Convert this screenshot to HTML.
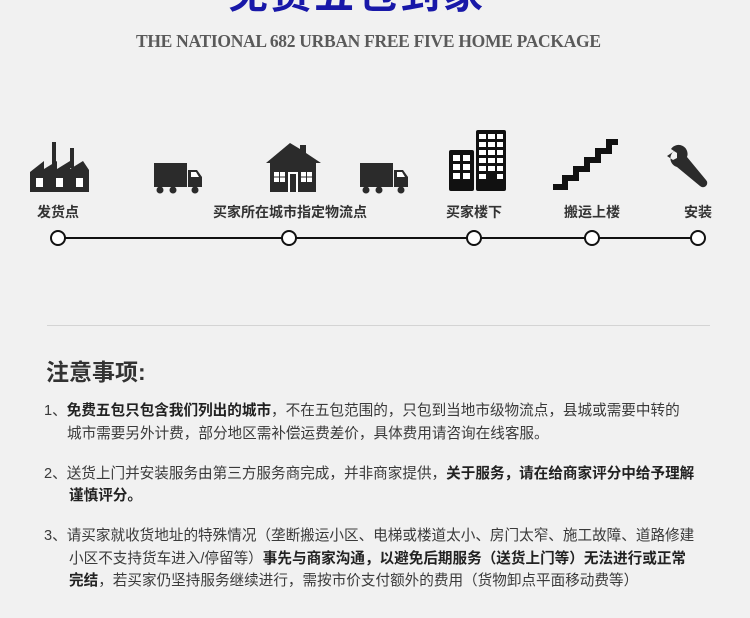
<!DOCTYPE html>
<html><head><meta charset="utf-8"><style>
html,body{margin:0;padding:0}
body{width:750px;height:618px;background:#f1f1f1;position:relative;overflow:hidden;font-family:"Liberation Sans","Noto Sans CJK SC",sans-serif;color:#333}
.a{position:absolute;white-space:nowrap}
.t{font-size:14.6px;line-height:22px;color:#3a3a3a}
.b{font-weight:bold;color:#222}
.lab{font-size:14px;font-weight:bold;color:#333;transform:translateX(-50%)}
</style></head><body>
<div class="a" style="left:228px;top:-38px;font-size:40px;font-weight:bold;color:#1818a8;letter-spacing:3px;font-family:'Noto Sans CJK SC',sans-serif">免费五包到家</div>
<div class="a" style="left:136px;top:31px;font-family:'Liberation Serif',serif;font-size:17.5px;font-weight:bold;color:#5a5a5a;letter-spacing:-0.3px">THE NATIONAL 682 URBAN FREE FIVE HOME PACKAGE</div>

<svg class="a" style="left:0;top:0" width="750" height="260">
<g fill="#2b2b2b">
<rect x="52" y="142" width="4" height="26"/><rect x="70" y="148" width="4" height="20"/>
<polygon points="30,192 30,172 44,161 44,169 57,161 57,169 70,161 70,169 83,161 89,170 89,192"/>
<rect x="154" y="163" width="33" height="24"/>
<path d="M188,170 h9 l5,7 v10 h-14z"/>
<circle cx="160" cy="190" r="3.5"/><circle cx="173" cy="190" r="3.5"/><circle cx="195" cy="190" r="3.5"/>
<polygon points="266,163 290,143 300,149 300,145 306,145 306,153 321,163"/>
<rect x="270" y="163" width="46" height="29"/>
<rect x="360" y="163" width="33" height="24"/>
<path d="M394,170 h9 l5,7 v10 h-14z"/>
<circle cx="366" cy="190" r="3.5"/><circle cx="379" cy="190" r="3.5"/><circle cx="401" cy="190" r="3.5"/>
</g>
<g fill="#fff">
<rect x="36" y="178" width="7" height="9"/><rect x="56" y="178" width="7" height="9"/><rect x="76" y="178" width="7" height="9"/>
<path d="M191,172 h5 l3,5 h-8z"/><path d="M397,172 h5 l3,5 h-8z"/>
<rect x="274" y="172" width="11" height="10"/><rect x="301" y="172" width="11" height="10"/>
<rect x="288" y="172" width="10" height="20"/>
</g>
<g fill="#2b2b2b"><rect x="279" y="172" width="1" height="10"/><rect x="274" y="176.5" width="11" height="1"/><rect x="306" y="172" width="1" height="10"/><rect x="301" y="176.5" width="11" height="1"/><rect x="290" y="174" width="6" height="18"/></g>
<rect x="449" y="150" width="25" height="41" rx="2" fill="#111"/>
<rect x="476" y="130" width="30" height="61" rx="2" fill="#111"/>
<g fill="#fff">
<rect x="453" y="155" width="7" height="6"/><rect x="463" y="155" width="7" height="6"/>
<rect x="453" y="164" width="7" height="6"/><rect x="463" y="164" width="7" height="6"/>
<rect x="453" y="173" width="7" height="6"/><rect x="463" y="173" width="7" height="6"/>
<rect x="479" y="134" width="7" height="5"/><rect x="488" y="134" width="7" height="5"/><rect x="497" y="134" width="6" height="5"/>
<rect x="479" y="142" width="7" height="5"/><rect x="488" y="142" width="7" height="5"/><rect x="497" y="142" width="6" height="5"/>
<rect x="479" y="150" width="7" height="5"/><rect x="488" y="150" width="7" height="5"/><rect x="497" y="150" width="6" height="5"/>
<rect x="479" y="158" width="7" height="5"/><rect x="488" y="158" width="7" height="5"/><rect x="497" y="158" width="6" height="5"/>
<rect x="479" y="166" width="7" height="5"/><rect x="488" y="166" width="7" height="5"/><rect x="497" y="166" width="6" height="5"/>
<rect x="479" y="174" width="7" height="5"/><rect x="497" y="174" width="6" height="5"/>
</g>
<path d="M553,187 h12 v-9 h11 v-9 h11 v-9 h11 v-9 h11 v-9 h9" fill="none" stroke="#111" stroke-width="6"/>
<g fill="#2b2b2b">
<path d="M676,150 a9,9 0 0 0 1,17 l23,19 a3,3 0 0 0 6,-6 l-19,-23 a9,9 0 0 0 -16,-8 l6,4 v5 l-4,2 l-6,-4z"/>
</g>
<line x1="58" y1="238" x2="698" y2="238" stroke="#111" stroke-width="2"/>
<g fill="#fff" stroke="#111" stroke-width="2">
<circle cx="58" cy="238" r="7"/><circle cx="289" cy="238" r="7"/><circle cx="474" cy="238" r="7"/><circle cx="592" cy="238" r="7"/><circle cx="698" cy="238" r="7"/>
</g>
</svg>
<div class="a lab" style="left:58px;top:202px">发货点</div>
<div class="a lab" style="left:290px;top:202px">买家所在城市指定物流点</div>
<div class="a lab" style="left:474px;top:202px">买家楼下</div>
<div class="a lab" style="left:592px;top:202px">搬运上楼</div>
<div class="a lab" style="left:698px;top:202px">安装</div>

<div class="a" style="left:47px;top:325px;width:663px;height:1px;background:#d4d4d4"></div>
<div class="a" style="left:46px;top:353px;font-size:23px;font-weight:bold;color:#333">注意事项:</div>

<div class="a t" style="left:44px;top:400px">1、<span class="b">免费五包只包含我们列出的城市</span>，不在五包范围的，只包到当地市级物流点，县城或需要中转的</div>
<div class="a t" style="left:67px;top:423px">城市需要另外计费，部分地区需补偿运费差价，具体费用请咨询在线客服。</div>
<div class="a t" style="left:44px;top:463px">2、送货上门并安装服务由第三方服务商完成，并非商家提供，<span class="b">关于服务，请在给商家评分中给予理解</span></div>
<div class="a t" style="left:69px;top:485px"><span class="b">谨慎评分。</span></div>
<div class="a t" style="left:44px;top:525px">3、请买家就收货地址的特殊情况（垄断搬运小区、电梯或楼道太小、房门太窄、施工故障、道路修建</div>
<div class="a t" style="left:69px;top:548px">小区不支持货车进入/停留等）<span class="b">事先与商家沟通，以避免后期服务（送货上门等）无法进行或正常</span></div>
<div class="a t" style="left:69px;top:570px"><span class="b">完结</span>，若买家仍坚持服务继续进行，需按市价支付额外的费用（货物卸点平面移动费等）</div>
</body></html>
